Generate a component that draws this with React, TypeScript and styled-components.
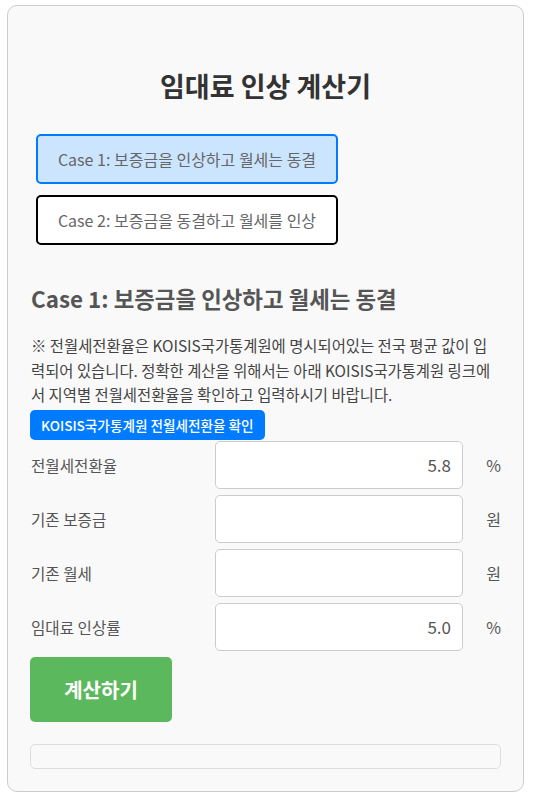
import React from "react";
import styled, { createGlobalStyle } from "styled-components";

const Global = createGlobalStyle`
  html, body { margin: 0; padding: 0; background: #ffffff; }
  body { font-family: "Noto Sans CJK KR", "Noto Sans", sans-serif; }
  * { box-sizing: border-box; }
`;

const Card = styled.div`
  width: 517px;
  margin: 5px 0 5px 7px;
  border: 1px solid #cccccc;
  border-radius: 10px;
  background: #f9f9f9;
  padding: 22px;
  display: flex;
  flex-direction: column;
`;

const Title = styled.h1`
  margin: 39px 0 29px 0;
  font-size: 27px;
  line-height: 38px;
  font-weight: 700;
  color: #333333;
  text-align: center;
`;

const CaseList = styled.div`
  display: flex;
  flex-direction: column;
  align-items: flex-start;
  gap: 11px;
  padding-left: 6px;
`;

const CaseButton = styled.button<{ $active?: boolean }>`
  height: 50px;
  width: 302px;
  padding: 0;
  font-family: inherit;
  font-size: 16px;
  color: #666666;
  border-radius: 5px;
  border: 2px solid ${(p) => (p.$active ? "#007bff" : "#000000")};
  background: ${(p) => (p.$active ? "#cce5ff" : "#ffffff")};
  cursor: pointer;
`;

const SectionTitle = styled.h2`
  margin: 37px 0 19px 1px;
  font-size: 22.4px;
  line-height: 32px;
  font-weight: 700;
  color: #555555;
`;

const Notice = styled.p`
  margin: 0 0 3px 1px;
  font-size: 15.4px;
  line-height: 24.5px;
  color: #444444;
`;

const LinkButton = styled.a`
  align-self: flex-start;
  display: inline-flex;
  align-items: center;
  height: 30px;
  padding: 0 11px;
  background: #007bff;
  color: #ffffff;
  font-size: 13.6px;
  font-weight: 500;
  border-radius: 5px;
  text-decoration: none;
`;

const Rows = styled.div`
  display: flex;
  flex-direction: column;
  gap: 6px;
  margin-top: 1px;
`;

const Row = styled.div`
  display: grid;
  grid-template-columns: 185px 248px 1fr;
  align-items: center;
`;

const Label = styled.label`
  padding-left: 1px;
  font-size: 15.6px;
  color: #555555;
`;

const Input = styled.input`
  height: 48px;
  width: 248px;
  border: 1px solid #cccccc;
  border-radius: 5px;
  background: #ffffff;
  padding: 0 11px;
  text-align: right;
  font-family: inherit;
  font-size: 17px;
  color: #555555;
  outline: none;
`;

const Unit = styled.span`
  text-align: right;
  font-size: 16px;
  color: #555555;
`;

const CalcButton = styled.button`
  align-self: flex-start;
  margin-top: 6px;
  width: 142px;
  height: 65px;
  border: none;
  border-radius: 5px;
  background: #5cb85c;
  color: #ffffff;
  font-family: inherit;
  font-size: 20px;
  font-weight: 700;
  cursor: pointer;
`;

const Result = styled.div`
  margin-top: 22px;
  height: 25px;
  border: 1px solid #dddddd;
  border-radius: 5px;
  background: #f9f9f9;
`;

const fields = [
  { label: "전월세전환율", value: "5.8", unit: "%" },
  { label: "기존 보증금", value: "", unit: "원" },
  { label: "기존 월세", value: "", unit: "원" },
  { label: "임대료 인상률", value: "5.0", unit: "%" },
];

export default function App() {
  return (
    <>
      <Global />
      <Card>
        <Title>임대료 인상 계산기</Title>
        <CaseList>
          <CaseButton $active>Case 1: 보증금을 인상하고 월세는 동결</CaseButton>
          <CaseButton>Case 2: 보증금을 동결하고 월세를 인상</CaseButton>
        </CaseList>
        <SectionTitle>Case 1: 보증금을 인상하고 월세는 동결</SectionTitle>
        <Notice>
          ※ 전월세전환율은 KOISIS국가통계원에 명시되어있는 전국 평균 값이 입력되어 있습니다. 정확한 계산을 위해서는 아래 KOISIS국가통계원 링크에서 지역별 전월세전환율을 확인하고 입력하시기 바랍니다.
        </Notice>
        <LinkButton href="#">KOISIS국가통계원 전월세전환율 확인</LinkButton>
        <Rows>
          {fields.map((f) => (
            <Row key={f.label}>
              <Label>{f.label}</Label>
              <Input defaultValue={f.value} />
              <Unit>{f.unit}</Unit>
            </Row>
          ))}
        </Rows>
        <CalcButton>계산하기</CalcButton>
        <Result />
      </Card>
    </>
  );
}
